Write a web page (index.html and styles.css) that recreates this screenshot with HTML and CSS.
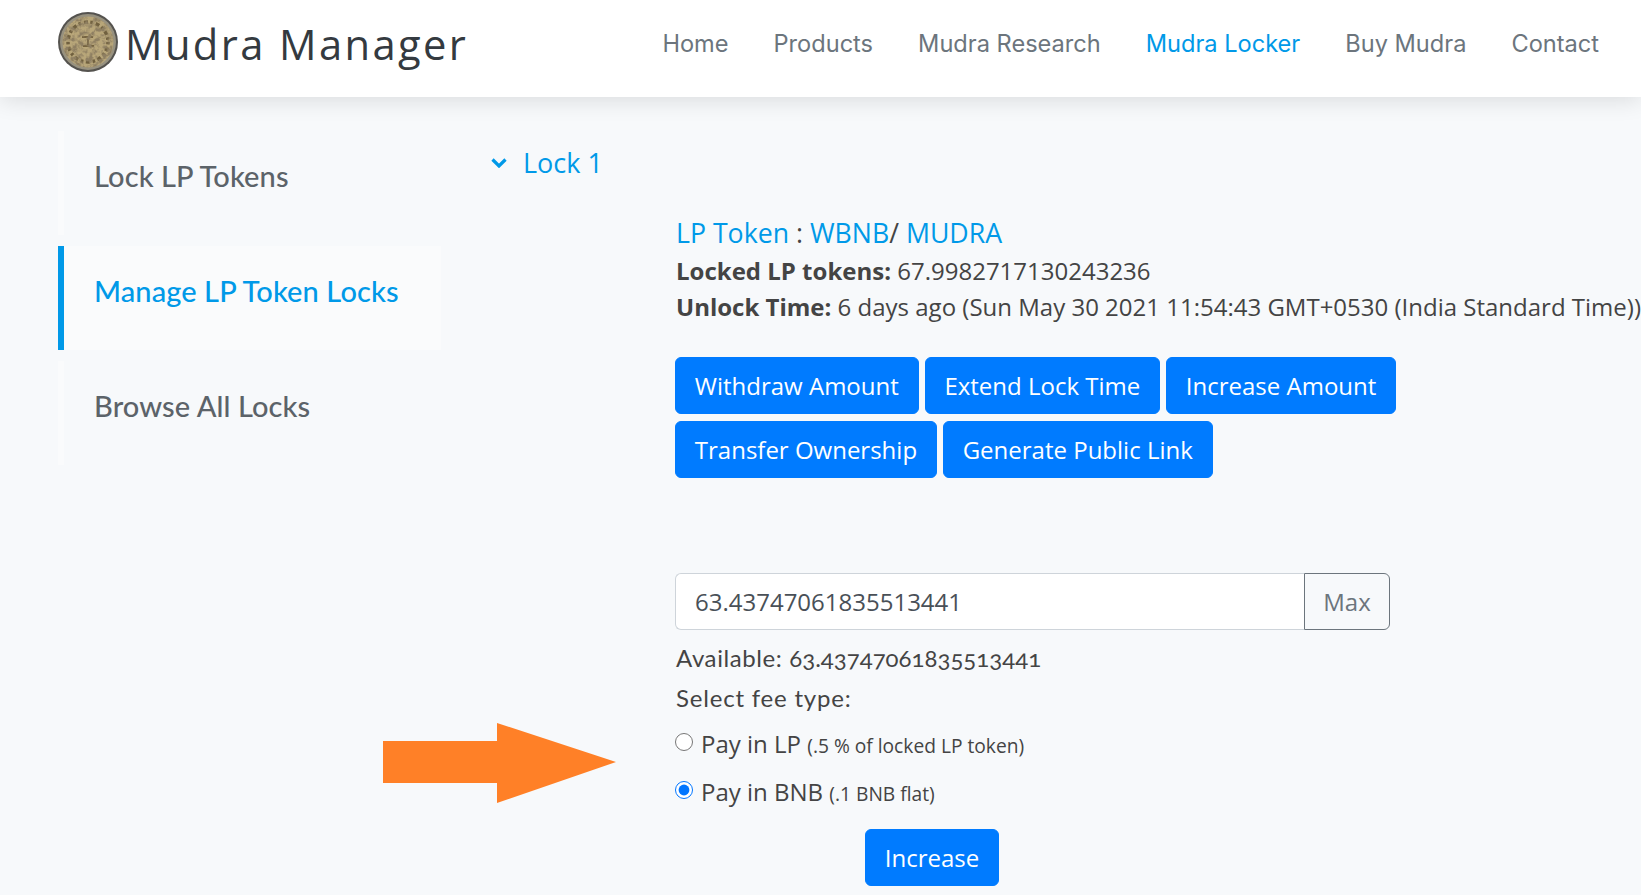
FILE: index.html
```html
<!DOCTYPE html>
<html lang="en">
<head>
<meta charset="utf-8">
<title>Mudra Manager</title>
<link rel="stylesheet" href="styles.css">
</head>
<body>
<header class="header">
  <a class="brand">
    <svg class="coin" viewBox="0 0 60 60" aria-hidden="true">
      <defs>
        <filter id="grain" x="0" y="0" width="100%" height="100%">
          <feTurbulence type="fractalNoise" baseFrequency="0.2" numOctaves="3" seed="11"/>
          <feColorMatrix values="0 0 0 0 .27  0 0 0 0 .21  0 0 0 0 .12  3.4 0 0 0 -1.35"/>
          <feComposite in2="SourceGraphic" operator="in"/>
          <feGaussianBlur stdDeviation=".45"/>
        </filter>
      </defs>
      <circle cx="30" cy="30" r="30" fill="#55534f"/>
      <circle cx="30" cy="30" r="28" fill="#97917f"/>
      <circle cx="30" cy="30" r="25.500" fill="#b8a679"/>
      <circle cx="30" cy="30" r="20" fill="none" stroke="#70603f" stroke-width="3.500" stroke-dasharray="2.500 3 4 2.500"/>
      <path d="M24 25h11M30 25v9M25 34h11" fill="none" stroke="#75633f" stroke-width="2"/>
      <circle cx="30" cy="30" r="25.500" filter="url(#grain)"/>
    </svg>
    <span class="brand-name">Mudra Manager</span>
  </a>
  <nav class="nav">
    <a>Home</a>
    <a>Products</a>
    <a>Mudra Research</a>
    <a class="current">Mudra Locker</a>
    <a>Buy Mudra</a>
    <a>Contact</a>
  </nav>
</header>

<main class="main">
  <aside class="sidebar">
    <a class="side-item">Lock LP Tokens</a>
    <a class="side-item active">Manage LP Token Locks</a>
    <a class="side-item">Browse All Locks</a>
  </aside>

  <section class="content">
    <div class="lock-title">
      <svg class="chevron" viewBox="0 0 16 10" aria-hidden="true"><path d="M1.500 1.500 8 8l6.500-6.500" fill="none" stroke="#0099e8" stroke-width="3.200"/></svg>
      <span>Lock 1</span>
    </div>
    <div class="panel">
      <div class="token-line"><a>LP Token</a> : <a>WBNB</a>/ <a>MUDRA</a></div>
      <div class="info"><b>Locked LP tokens:</b> 67.9982717130243236</div>
      <div class="info"><b>Unlock Time:</b> 6 days ago (Sun May 30 2021 11:54:43 GMT+0530 (India Standard Time))</div>

      <div class="actions">
        <button class="btn">Withdraw Amount</button>
        <button class="btn">Extend Lock Time</button>
        <button class="btn">Increase Amount</button>
        <button class="btn">Transfer Ownership</button>
        <button class="btn">Generate Public Link</button>
      </div>

      <div class="input-group">
        <input class="amount" type="text" value="63.43747061835513441">
        <button class="max">Max</button>
      </div>

      <p class="raleway available">Available: <span class="figures">63.43747061835513441</span></p>
      <p class="raleway fee-label">Select fee type:</p>

      <label class="radio-row first">
        <input type="radio" name="fee"> <span>Pay in LP <small>(.5 % of locked LP token)</small></span>
      </label>
      <label class="radio-row">
        <input type="radio" name="fee" checked> <span>Pay in BNB <small>(.1 BNB flat)</small></span>
      </label>

      <div class="submit"><button class="btn">Increase</button></div>
    </div>
  </section>

  <svg class="arrow" viewBox="0 0 233 80" aria-hidden="true">
    <path d="M0 18H114V0L233 39 114 80V60H0Z" fill="#ff8027"/>
  </svg>
</main>
</body>
</html>
```
FILE: styles.css
```css
* { box-sizing: border-box; }
html, body { margin: 0; height: 895px; overflow: hidden; }
body {
  background: #f7f9fb;
  color: #444;
  font-family: "Open Sans", "Liberation Sans", sans-serif;
  font-size: 24px;
  line-height: 36px;
}
a { text-decoration: none; }

.header {
  height: 97px;
  background: #fff;
  box-shadow: 0 3px 22px rgba(0, 0, 0, .12);
  display: flex;
  align-items: center;
  justify-content: space-between;
  padding: 0 42px 18px 58px;
  position: relative;
}
.brand { display: flex; align-items: center; gap: 7px; padding-top: 4px; }
.coin { width: 60px; height: 60px; display: block; }
.brand-name {
  font-size: 41.700px;
  font-weight: 500;
  line-height: 60px;
  letter-spacing: 2.400px;
  color: #343a40;
  padding-top: 4px;
}
.nav {
  display: flex;
  gap: 45px;
  font-family: Inter, "Liberation Sans", sans-serif;
  font-size: 23.600px;
  padding-top: 8px;
  color: #6c757d;
}
.nav .current { color: #0099e8; }

.main { display: flex; position: relative; padding: 34px 0 0 58px; }
.sidebar {
  width: 383px;
  flex: none;
  display: flex;
  flex-direction: column;
  gap: 11px;
  font-family: Lato, "Liberation Sans", sans-serif;
  font-size: 29px;
  letter-spacing: .1px;
}
.side-item {
  height: 104px;
  padding: 27px 0 0 30px;
  border-left: 6px solid #fafbfc;
  color: #5c6369;
  font-weight: 500;
}
.side-item.active {
  background: #fafbfc;
  border-left-color: #0099e8;
  color: #0099e8;
}

.content { margin-left: 50px; flex: none; white-space: nowrap; }
.lock-title {
  display: flex;
  align-items: center;
  gap: 16px;
  color: #0099e8;
  font-size: 27px;
  height: 36px;
  margin-top: 14px;
}
.chevron { width: 16px; height: 10px; display: block; }
.panel { padding: 34px 0 0 184px; width: 1150px; }
.token-line { font-size: 26.700px; line-height: 36px; margin-bottom: 2px; padding-left: 1px; color: #444; }
.token-line a { color: #0099e8; }
.info { line-height: 36px; padding-left: 1px; }
.info b { font-weight: 700; }

.actions {
  display: flex;
  flex-wrap: wrap;
  gap: 7px 6px;
  width: 730px;
  margin: 32px 0 95px;
}
.btn {
  background: #007bff;
  color: #fff;
  border: 1px solid #007bff;
  border-radius: 6px;
  font-family: inherit;
  font-size: 24px;
  line-height: 36px;
  padding: 9.500px 18.800px;
}

.input-group { display: flex; width: 715px; height: 57px; }
.amount {
  width: 629px;
  height: 57px;
  padding: 9px 19px;
  border: 1px solid #ced4da;
  border-right: 0;
  border-radius: 6px 0 0 6px;
  background: #fff;
  color: #495057;
  font-family: inherit;
  font-size: 24px;
}
.max {
  width: 86px;
  height: 57px;
  border: 1px solid #6c757d;
  border-radius: 0 6px 6px 0;
  background: #f7f9fb;
  color: #6c757d;
  font-family: inherit;
  font-size: 24px;
  padding: 0;
}

.raleway { font-family: Lato, "Liberation Sans", sans-serif; margin: 0; padding-left: 1px; }
.available { margin-top: 10px; letter-spacing: .6px; }
.figures { letter-spacing: 0; font-variant-numeric: oldstyle-nums; }
.fee-label { margin-top: 4px; letter-spacing: .8px; }

.radio-row { display: flex; align-items: center; gap: 8px; height: 36px; }
.radio-row.first { margin-top: 11px; }
.radio-row + .radio-row { margin-top: 12px; }
.radio-row input { width: 18px; height: 18px; margin: -6px 0 0; accent-color: #0075ff; }
.radio-row small { font-size: 19.200px; }

.submit { width: 514px; display: flex; justify-content: center; margin-top: 18px; }

.arrow { position: absolute; left: 383px; top: 626px; width: 233px; height: 80px; }
```
